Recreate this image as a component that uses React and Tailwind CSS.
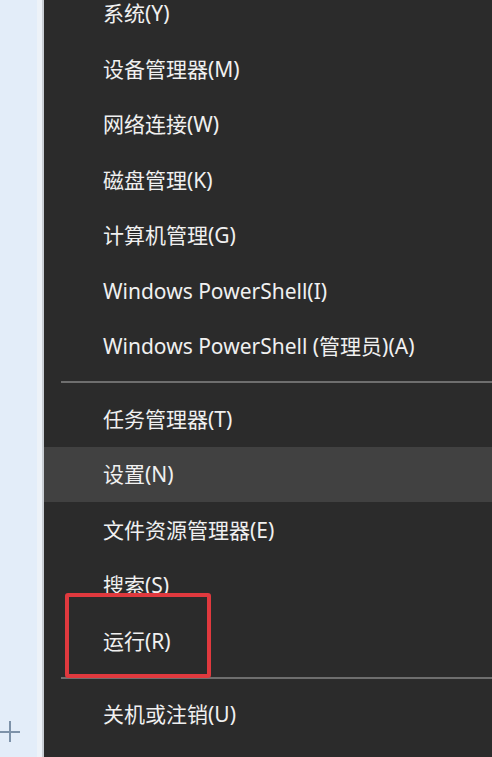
const topItems = [
  "系统(Y)",
  "设备管理器(M)",
  "网络连接(W)",
  "磁盘管理(K)",
  "计算机管理(G)",
  "Windows PowerShell(I)",
  "Windows PowerShell (管理员)(A)",
];

const midItems = [
  { label: "任务管理器(T)" },
  { label: "设置(N)", active: true },
  { label: "文件资源管理器(E)" },
  { label: "搜索(S)" },
  { label: "运行(R)" },
];

function Item({ label, active }) {
  return (
    <div
      className={`h-[55.5px] shrink-0 flex items-center pl-[59px] pt-[1px] text-[21px] text-[#f0f0f0] ${
        active ? "bg-[#414141]" : ""
      }`}
    >
      {label}
    </div>
  );
}

function Separator({ h, top }) {
  return (
    <div className={`shrink-0 ${h} ${top} pl-[17px]`}>
      <div className="h-[2px] bg-[#6e6e6e]" />
    </div>
  );
}

export default function App() {
  return (
    <div
      className="relative flex w-[492px] h-[757px] overflow-hidden"
      style={{ fontFamily: '"Noto Sans", "Noto Sans CJK SC", sans-serif' }}
    >
      <div className="relative w-[44px] shrink-0 flex">
        <div className="w-[37px] bg-[#e3edf9]" />
        <div className="w-[5px] bg-[#edf2f8]" />
        <div className="w-[2px] bg-[#c9ced4]" />
        {/* plus button */}
        <div className="absolute left-0 top-[721px] w-[20px] h-[21px]">
          <div className="absolute left-0 top-[10px] w-[20px] h-[1.5px] bg-[#7d92a9]" />
          <div className="absolute left-[9px] top-0 w-[1.5px] h-[21px] bg-[#7d92a9]" />
        </div>
      </div>

      <div className="flex-1 bg-[#2b2b2b] flex flex-col">
        <div className="-mt-[14.5px] flex flex-col">
          {topItems.map((l) => (
            <Item key={l} label={l} />
          ))}
          <Separator h="h-[17px]" top="pt-[7px]" />
          {midItems.map((it) => (
            <Item key={it.label} {...it} />
          ))}
          <Separator h="h-[18px]" top="pt-[8px]" />
          <Item label="关机或注销(U)" />
        </div>
      </div>

      {/* red highlight box */}
      <div className="absolute left-[65px] top-[593px] w-[146px] h-[85px] border-4 border-[#e0393e] rounded-[3px]" />
    </div>
  );
}
